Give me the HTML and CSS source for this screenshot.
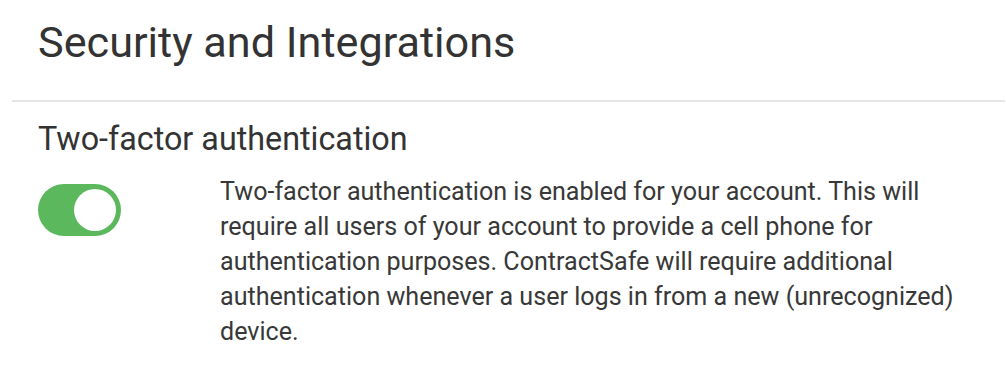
FILE: index.html
```html
<!DOCTYPE html>
<html lang="en">
<head>
    <meta charset="UTF-8">
    <meta name="viewport" content="width=device-width, initial-scale=1.0">
    <title>Security and Integrations</title>
    <link rel="stylesheet" href="styles.css">
</head>
<body>
    <div class="settings-panel">
        <div class="panel-header">
            <h1>Security and Integrations</h1>
        </div>

        <div class="setting-section">
            <h2>Two-factor authentication</h2>
            <div class="setting-row">
                <label class="switch">
                    <input type="checkbox" checked>
                    <span class="switch-track"><span class="switch-knob"></span></span>
                </label>
                <p class="setting-text">
                    Two-factor authentication is enabled for your account. This will require all users of your account to provide a cell phone for authentication purposes. ContractSafe will require additional authentication whenever a user logs in from a new (unrecognized) device.
                </p>
            </div>
        </div>
    </div>
</body>
</html>
```

FILE: styles.css
```css
* {
    margin: 0;
    padding: 0;
    box-sizing: border-box;
    font-family: 'Roboto', sans-serif;
}

body {
    background-color: #fff;
    color: #333;
}

.settings-panel {
    padding: 0 1px 0 12px;
}

.panel-header {
    padding: 17px 0 31px 26px;
    border-bottom: 2px solid #e5e5e5;
}

.panel-header h1 {
    font-size: 43.2px;
    font-weight: 400;
    line-height: 1.2;
    color: #333;
}

.setting-section {
    padding: 18px 27px 0 26px;
}

.setting-section h2 {
    font-size: 32.3px;
    font-weight: 400;
    line-height: 1.2;
    color: #333;
}

.setting-row {
    display: flex;
    align-items: flex-start;
    gap: 99px;
    margin-top: 15px;
}

.switch {
    flex: none;
    margin-top: 10px;
    cursor: pointer;
}

.switch input {
    display: none;
}

.switch-track {
    display: flex;
    justify-content: flex-end;
    align-items: center;
    width: 83px;
    height: 52px;
    padding: 0 5px;
    border-radius: 26px;
    background-color: #5cb85c;
}

.switch-knob {
    width: 42px;
    height: 42px;
    border-radius: 50%;
    background-color: #fff;
}

.setting-text {
    flex: 1;
    font-size: 25.1px;
    line-height: 35px;
    color: #383838;
}
```
